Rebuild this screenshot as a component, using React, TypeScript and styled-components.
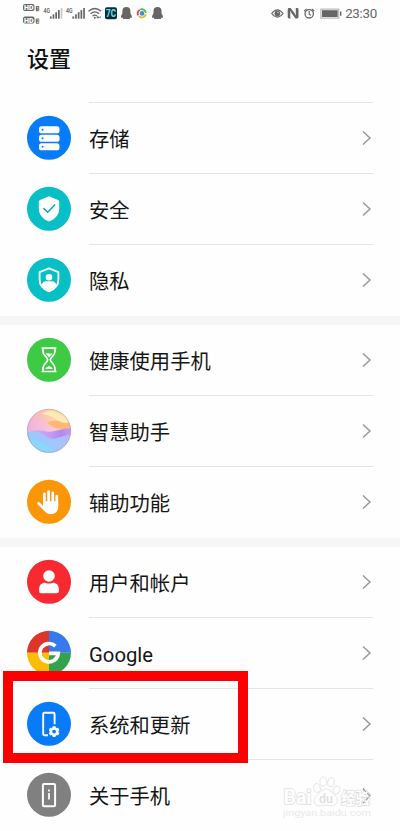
import React from "react";
import styled, { createGlobalStyle } from "styled-components";

const Global = createGlobalStyle`
  * { box-sizing: border-box; }
  body { margin: 0; background: #fefefe; font-family: Roboto, "Noto Sans CJK SC", sans-serif; color: #151515; overflow: hidden; }
  svg { display: block; flex: none; }
`;
const Screen = styled.main`
  position: relative;
  width: 400px;
  height: 831px;
  overflow: hidden;
  background: #fefefe;
`;
const StatusBar = styled.header`
  display: flex;
  justify-content: space-between;
  height: 28px;
  padding: 0 23px;
  color: #666;
`;
const Clock = styled.div`
  display: flex;
  align-items: center;
  font-size: 13.4px;
  line-height: 28px;
  letter-spacing: -0.3px;
`;
const Title = styled.h1`
  margin: 0;
  height: 74px;
  padding: 16px 27px 0;
  font-size: 22px;
  line-height: 32px;
  font-weight: 500;
  color: #111;
`;
const Section = styled.section`
  height: 213px;
  margin-bottom: 9px;
`;
const Gap = styled.div`
  height: 9px;
  margin: -8px 0 -1px;
  background: #f6f6f6;
`;
const Row = styled.div`
  display: flex;
  align-items: center;
  height: 71px;
  padding-left: 27px;
`;
const Label = styled.div<{ $line: boolean }>`
  flex: 1;
  display: flex;
  align-items: center;
  justify-content: space-between;
  height: 71px;
  margin: 0 27px 0 17px;
  padding: 4px 1px 0 0;
  border-top: 1px solid ${(p) => (p.$line ? "#e4e4e4" : "transparent")};
  font-size: 20.3px;
  line-height: 30px;
`;
const Arrow = styled.svg`
  margin-top: -5px;
`;
const Highlight = styled.div`
  position: absolute;
  left: 3px;
  top: 671px;
  width: 245px;
  height: 92px;
  border: 10px solid #fb0000;
`;
const Watermark = styled.svg`
  position: absolute;
  left: 280px;
  top: 774px;
`;
const OutlinedText = styled.text`
  paint-order: stroke;
  stroke-width: 1.6px;
  stroke-linejoin: round;
`;

const Storage = () => (
  <>
    <circle cx="22" cy="22" r="22" fill="#087cf8" />
    {[10.5, 19, 27.5].map((y) => (
      <g key={y}>
        <rect x="12" y={y} width="20.5" height="7" rx="2.6" fill="#fff" />
        <circle cx="15.6" cy={y + 3.5} r="1" fill="#087cf8" />
      </g>
    ))}
  </>
);
const Security = () => (
  <>
    <circle cx="22" cy="22" r="22" fill="#07bfc4" />
    <path d="M22 9.5 31 13.2Q32.2 13.7 32.2 15V22C32.2 28 28 32.5 22 34.7 16 32.5 11.8 28 11.8 22V15Q11.8 13.7 13 13.2Z" fill="#fff" />
    <path d="m16.3 21.3 4.4 4.2 7.5-7.7" fill="none" stroke="#07aeb5" strokeWidth="1.5" />
  </>
);
const Privacy = () => (
  <>
    <circle cx="22" cy="22" r="22" fill="#07bfc4" />
    <path d="m22 10.6 9.4 3.8V22c0 5.5-3.9 9.5-9.4 11.6-5.5-2.1-9.4-6.1-9.4-11.6v-7.6Z" fill="none" stroke="#fff" strokeWidth="1.8" strokeLinejoin="round" />
    <circle cx="22" cy="19.5" r="3.3" fill="#fff" />
    <path d="M14.8 27.5c.2-2.6 2-4 4.4-4h5.6c2.4 0 4.2 1.4 4.4 4-1.6 2.3-4 4-7.2 5.2-3.2-1.2-5.6-2.9-7.2-5.2Z" fill="#fff" />
  </>
);
const Hourglass = () => (
  <>
    <circle cx="22" cy="22" r="22" fill="#3fca46" />
    <path
      d="M15.2 10.3h13.6M15.2 33.7h13.6M16 10.5v3.2c0 4.2 4.7 5.6 4.7 8.3s-4.7 4.1-4.7 8.3v3.2M28 10.5v3.2c0 4.2-4.7 5.6-4.7 8.3s4.7 4.1 4.7 8.3v3.2"
      fill="none" stroke="#fff" strokeWidth="1.7" strokeLinecap="round" strokeLinejoin="round"
    />
    <path d="M18.9 15.8q1.7-1.4 3.2 0 1.5.6 3-.6-.2 2.2-3.1 4.3-2.7-2-3.1-3.7ZM18.2 31.2q.6-2.2 3.8-3 3.2.8 3.8 3Z" fill="#fff" />
  </>
);
const Assistant = () => (
  <>
    <defs>
      <linearGradient id="sky" x1="0" x2="1" y1=".2" y2="0">
        <stop stopColor="#f5b2c8" /><stop offset=".5" stopColor="#fbcfae" /><stop offset="1" stopColor="#fde29b" />
      </linearGradient>
      <linearGradient id="pink" x1="0" x2="1">
        <stop stopColor="#f0b0dc" /><stop offset=".55" stopColor="#f9c6d8" /><stop offset="1" stopColor="#fbc3b4" />
      </linearGradient>
      <linearGradient id="violet" x1="0" x2="1">
        <stop stopColor="#dfb0f0" /><stop offset=".55" stopColor="#c39af3" /><stop offset=".75" stopColor="#b487f0" /><stop offset="1" stopColor="#cb9ff2" />
      </linearGradient>
      <linearGradient id="sea" x1="0" x2="1" y1=".3" y2="0">
        <stop stopColor="#94cafd" /><stop offset=".6" stopColor="#a4c5fd" /><stop offset="1" stopColor="#bcb2fa" />
      </linearGradient>
      <filter id="soft" x="-10%" y="-10%" width="120%" height="120%"><feGaussianBlur stdDeviation=".55" /></filter>
      <clipPath id="orb"><circle cx="22" cy="22" r="22" /></clipPath>
    </defs>
    <g clipPath="url(#orb)">
      <path d="M0 0h44v44H0Z" fill="url(#sky)" />
      <g filter="url(#soft)">
        <path d="M15 5q7-5 15-1 9 4 12 9-8 2-14-3-5-4-13-5Z" fill="#fdebb4" />
        <path d="M-2 12q14-6 22 2 9 8 26 3v9H-2Z" fill="url(#pink)" />
        <path d="M20 14q8-4 13-1 6 3 13 0v5q-16 6-26-4Z" fill="#fcb877" />
        <path d="M-2 24q10-4 18-2 8 2 15-.5 8-2.5 15-2.5v27H-2Z" fill="url(#violet)" />
        <path d="M-2 24q13-3 20 3 6 5 13 2 8-3 15-3v20H-2Z" fill="url(#sea)" />
        <path d="M-2 33q9-4 17 0t14 12H-2Z" fill="#86dcfe" opacity=".7" />
      </g>
    </g>
    <circle cx="22" cy="22" r="21.6" fill="none" stroke="#aa91ad" strokeOpacity=".6" strokeWidth=".8" />
  </>
);
const Hand = () => (
  <>
    <circle cx="22" cy="22" r="22" fill="#fb9608" />
    <g stroke="#fff" strokeWidth="2.7" strokeLinecap="round" fill="none">
      <path d="M17.4 24V14M21.6 23V11.7M25.8 23V13M29.8 25V16.2M11.7 23.7l6.2 6" />
    </g>
    <path d="M16.1 21.5h15.1V27c0 4.3-2.5 7.2-6.7 7.2-4 0-5.6-1.2-7.5-3.6l-2.4-3.2 1.5-.8Z" fill="#fff" />
  </>
);
const User = () => (
  <>
    <circle cx="22" cy="22" r="22" fill="#f82931" />
    <circle cx="22" cy="16.2" r="5.8" fill="#fff" />
    <path d="M12.1 31.5v-2.2c0-4.2 2.7-6.4 6-6.4q3.9 1.8 7.8 0c3.3 0 6 2.2 6 6.4v2.2q0 2-2 2H14q-1.9 0-1.9-2Z" fill="#fff" />
  </>
);
const GoogleMark = () => (
  <>
    <path d="M22 22H0A22 22 0 0 1 22 0Z" fill="#dd3529" />
    <path d="M22 22V0a22 22 0 0 1 22 22Z" fill="#3978ed" />
    <path d="M22 22h22a22 22 0 0 1-22 22Z" fill="#32a24d" />
    <path d="M22 22v22A22 22 0 0 1 0 22Z" fill="#fabc05" />
    <path d="M28.4 15.3A9.2 9.2 0 1 0 31.2 22.5H22" fill="none" stroke="#fff" strokeWidth="3.7" />
  </>
);
const gearTeeth = [0, 60, 120, 180, 240, 300];
const System = () => (
  <>
    <circle cx="22" cy="22" r="22" fill="#087cf8" />
    <path d="M21 33.5h-3.6q-1.2 0-1.2-1.2V12.2q0-1.2 1.2-1.2h9q1.2 0 1.2 1.2v10.3" fill="none" stroke="#fff" strokeWidth="1.9" />
    <circle cx="27.1" cy="29.8" r="6.5" fill="#087cf8" />
    <g fill="#fff">
      {gearTeeth.map((a) => <rect key={a} x="25.5" y="24.4" width="3.2" height="3" rx=".7" transform={`rotate(${a} 27.1 29.8)`} />)}
      <circle cx="27.1" cy="29.8" r="4.4" />
    </g>
    <circle cx="27.1" cy="29.8" r="1.9" fill="#087cf8" />
  </>
);
const About = () => (
  <>
    <circle cx="22" cy="22" r="22" fill="#808080" />
    <rect x="15.9" y="11.2" width="12.2" height="22.2" rx="1.2" fill="none" stroke="#fff" strokeWidth="2" />
    <path d="M22 16.8v2M22 20.2v6.4" stroke="#fff" strokeWidth="1.7" />
  </>
);

type Item = { label: string; icon: React.FC; line: boolean };
const groups: Item[][] = [
  [
    { label: "存储", icon: Storage, line: true },
    { label: "安全", icon: Security, line: true },
    { label: "隐私", icon: Privacy, line: true },
  ],
  [
    { label: "健康使用手机", icon: Hourglass, line: false },
    { label: "智慧助手", icon: Assistant, line: true },
    { label: "辅助功能", icon: Hand, line: true },
  ],
  [
    { label: "用户和帐户", icon: User, line: false },
    { label: "Google", icon: GoogleMark, line: true },
    { label: "系统和更新", icon: System, line: true },
    { label: "关于手机", icon: About, line: true },
  ],
];

const signalBars = [0, 1, 2, 3, 4];
const penguin = "M0 11.3Q-.6 8.5 1.2 6.3V4a4 4 0 0 1 8 0v2.3q1.8 2.2 1.2 5L9 10.5 8.5 12H2l-.6-1.5Z";

const LeftStatus = () => (
  <svg width="145" height="28" fill="#666">
    {[4, 16.5].map((y, i) => (
      <g key={y}>
        <rect x="0" y={y} width="11.5" height="7" rx="2" />
        <text x="1" y={y + 6} fontSize="7" fontWeight="900" fill="#fff" textLength="9.5" lengthAdjust="spacingAndGlyphs">HD</text>
        <rect x="12.8" y={y + 2} width="3.4" height="5.2" rx=".7" />
        <text x="13.4" y={y + 6.5} fontSize="4.5" fill="#fff">{i + 1}</text>
      </g>
    ))}
    {[20.5, 43].map((x, n) => (
      <g key={x}>
        <text x={x} y="12.8" fontSize="7" fontWeight="600" textLength="6.5" lengthAdjust="spacingAndGlyphs">4G</text>
        {signalBars.map((i) => (
          <rect key={i} x={x + 6.4 + i * 2.7} y={16.4 - i * 2.1} width="1.7" height={2.3 + i * 2.1} opacity={n === 0 && i === 4 ? 0.35 : 1} />
        ))}
      </g>
    ))}
    <g fill="none" stroke="#666" strokeWidth="1.3">
      <path d="M65.5 11.2q6.3-5.4 12.6 0M67.5 13.7q4.3-3.5 8.6 0M69.6 16q2.2-1.8 4.4 0" />
    </g>
    <circle cx="71.8" cy="17.8" r="1" />
    <path d="m73.5 17.3 1.4-1.4 1.3 1.4-1.3 1.4ZM76.3 17.3l.8-1.2.8 1.2-.8 1.2Z" />
    <rect x="82" y="7.2" width="12" height="12" rx="2" fill="#062e39" />
    <text x="83" y="17" fontSize="10" fontWeight="800" fill="#68d9ea" textLength="10" lengthAdjust="spacingAndGlyphs">7C</text>
    <path transform="translate(98.2 7)" d={penguin} />
    <g fill="none" strokeWidth="1.8">
      <path d="M115.2 15.3a4.1 4.1 0 0 1 1.6-5.3" stroke="#d84b3b" />
      <path d="M117.2 9.5a4.1 4.1 0 0 1 5.6 3.3" stroke="#4bb550" />
      <path d="M122.8 14a4.1 4.1 0 0 1-7 2.2" stroke="#e3bd3a" />
    </g>
    <circle cx="119" cy="13.4" r="2.3" fill="#448bd9" />
    <path transform="translate(129.3 7)" d={penguin} />
  </svg>
);

const RightStatus = () => (
  <svg width="74" height="28" fill="none" stroke="#666">
    <path d="M.7 13.5q5.7-7.2 11.4 0-5.7 7.2-11.4 0Z" strokeWidth="1.2" />
    <circle cx="6.4" cy="13.5" r="2.5" fill="#666" />
    <circle cx="7" cy="12.5" r=".7" fill="#ddd" stroke="none" />
    <path d="M19.7 18.5h-1.6q-1.4 0-1.4-1.4V9.4Q16.7 8 18.1 8h1.6l4.6 6.3V8h1.8q1.4 0 1.4 1.4v7.7q0 1.4-1.4 1.4h-1.6l-4.8-6.6Z" fill="#666" stroke="none" />
    <path d="M19.6 11.2v7.3M24.5 8v7.1" stroke="#fefefe" strokeWidth=".7" />
    <circle cx="38.2" cy="13.8" r="4.2" strokeWidth="1.3" />
    <path d="M38.2 11v3.1l1.7 1.1M33.1 11.2l2.4-2.4M43.3 11.2l-2.4-2.4" strokeWidth="1.1" />
    <rect x="49.9" y="9.1" width="17.9" height="9" stroke="#aaa" strokeWidth="1" />
    <rect x="51" y="10.2" width="15.7" height="6.8" fill="#666" stroke="none" />
    <path d="M69.7 11.5v4.2" strokeWidth="1.4" />
  </svg>
);

export default function App() {
  return (
    <Screen>
      <Global />
      <StatusBar>
        <LeftStatus />
        <Clock><RightStatus />23:30</Clock>
      </StatusBar>
      <Title>设置</Title>
      {groups.map((items, index) => (
        <React.Fragment key={index}>
          {index > 0 && <Gap />}
          <Section>
            {items.map(({ label, icon: Icon, line }) => (
              <Row key={label}>
                <svg width="45" height="45" viewBox="0 -.8 45 45"><Icon /></svg>
                <Label $line={line}>
                  <span>{label}</span>
                  <Arrow width="10" height="16" viewBox="0 0 10 16" fill="none" stroke="#999" strokeWidth="1.5">
                    <path d="m1 1.5 7 6.5-7 6.5" />
                  </Arrow>
                </Label>
              </Row>
            ))}
          </Section>
        </React.Fragment>
      ))}
      <Highlight />
      <Watermark width="96" height="46" fill="#fefefe" stroke="#dfdfdf" strokeWidth=".8">
        <OutlinedText x="3.5" y="30" fontSize="20" fontWeight="700" textLength="28" lengthAdjust="spacingAndGlyphs">Bai</OutlinedText>
        <ellipse cx="37" cy="14" rx="3.3" ry="4.4" transform="rotate(-15 37 14)" />
        <ellipse cx="43.2" cy="7.5" rx="3.2" ry="4.6" />
        <ellipse cx="51" cy="8.2" rx="3.2" ry="4.6" transform="rotate(12 51 8.2)" />
        <ellipse cx="56.5" cy="16" rx="3.2" ry="4.3" transform="rotate(20 56.5 16)" />
        <path d="M46.5 15c4 0 5 3.5 8 6 3.5 3 4.5 9-1 10.5-3 .7-4.5-.3-7.5-.3s-6 1.2-9 0c-4.5-2-3.5-7 0-10 3-2.6 5.5-6.2 9.5-6.2Z" />
        <text x="39" y="29" fontSize="13" fontWeight="500" fill="#dedede" stroke="none" textLength="14" lengthAdjust="spacingAndGlyphs">du</text>
        <OutlinedText x="61" y="30" fontSize="15.5" fontWeight="700" textLength="29" lengthAdjust="spacingAndGlyphs">经验</OutlinedText>
        <text x="3" y="42" fontSize="9.5" fill="#e9e9e9" stroke="none" textLength="88" lengthAdjust="spacingAndGlyphs">jingyan.baidu.com</text>
        <path d="m83 15 7 7-7 7" fill="none" stroke="#999" strokeWidth="1.1" strokeDasharray="4 2" />
      </Watermark>
    </Screen>
  );
}
